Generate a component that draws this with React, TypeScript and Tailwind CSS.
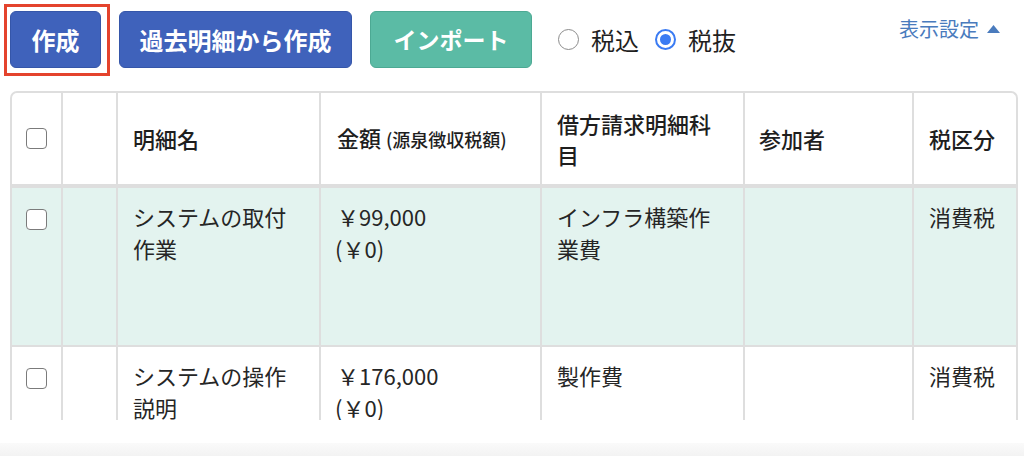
function Box() {
  return <span className="block w-[21px] h-[21px] rounded-[4px] border-[1.5px] border-[#7b7b7b] bg-white mx-auto" />;
}

function Radio({ checked, label }: { checked?: boolean; label: string }) {
  return (
    <label className="flex items-center gap-[12px]">
      {checked ? (
        <span className="flex items-center justify-center w-[21px] h-[21px] rounded-full border-2 border-[#3a7bf3] bg-white">
          <span className="w-[11px] h-[11px] rounded-full bg-[#3a7bf3]" />
        </span>
      ) : (
        <span className="w-[21px] h-[21px] rounded-full border-[1.5px] border-[#8c8c8c] bg-white" />
      )}
      <span className="text-[24px] text-[#1f1f1f]">{label}</span>
    </label>
  );
}

const rows = [
  { name: "システムの取付作業", amount: "￥99,000", tax: "(￥0)", account: "インフラ構築作業費", hl: true },
  { name: "システムの操作説明", amount: "￥176,000", tax: "(￥0)", account: "製作費", hl: false },
];

export default function App() {
  return (
    <div className="relative w-[1024px] h-[456px] overflow-hidden bg-white font-['Noto_Sans_CJK_JP','Noto_Sans',sans-serif] text-[#222]">
      <div className="flex items-start pl-[10px] pt-[11px] pr-[24px]">
        <button className="h-[57px] w-[91px] rounded-[6px] border border-[#3556a9] bg-[#3f62bb] text-[24px] font-bold text-white">
          作成
        </button>
        <button className="ml-[18px] h-[57px] w-[233px] rounded-[6px] border border-[#3556a9] bg-[#3f62bb] text-[24px] font-bold text-white">
          過去明細から作成
        </button>
        <button className="ml-[18px] h-[57px] w-[162px] rounded-[6px] border border-[#4ca993] bg-[#5bbba5] text-[23px] font-bold text-white">
          インポート
        </button>
        <div className="ml-[26px] flex h-[57px] items-center gap-[16px]">
          <Radio label="税込" />
          <Radio checked label="税抜" />
        </div>
        <button className="ml-auto mt-[3px] flex items-center gap-[8px] text-[20px] text-[#4a7bbd]">
          表示設定
          <svg width="13" height="8" viewBox="0 0 13 8">
            <path d="M0 8 L6.5 0 L13 8 Z" fill="#4a7bbd" />
          </svg>
        </button>
      </div>

      <div className="ml-[10px] mt-[23px] h-[329px] w-[1008px] overflow-hidden rounded-t-[7px] border-2 border-b-0 border-[#dedede]">
        <table className="w-[1162px] table-fixed border-separate border-spacing-0 text-[22px]">
          <colgroup>
            <col className="w-[51px]" />
            <col className="w-[55px]" />
            <col className="w-[203px]" />
            <col className="w-[221px]" />
            <col className="w-[203px]" />
            <col className="w-[169px]" />
            <col className="w-[260px]" />
          </colgroup>
          <thead>
            <tr className="h-[95px] text-left align-middle font-medium leading-[31px] text-[#1e1e1e]">
              <th className="border-b-4 border-r-2 border-[#dedede]">
                <Box />
              </th>
              <th className="border-b-4 border-r-2 border-[#dedede]" />
              <th className="border-b-4 border-r-2 border-[#dedede] pl-[15px] font-medium">明細名</th>
              <th className="border-b-4 border-r-2 border-[#dedede] pl-[16px] font-medium">
                金額 <span className="text-[18px]">(源泉徴収税額)</span>
              </th>
              <th className="border-b-4 border-r-2 border-[#dedede] px-[15px] font-medium">借方請求明細科目</th>
              <th className="border-b-4 border-r-2 border-[#dedede] pl-[14px] font-medium">参加者</th>
              <th className="border-b-4 border-[#dedede] pl-[15px] font-medium">税区分</th>
            </tr>
          </thead>
          <tbody>
            {rows.map((r) => (
              <tr
                key={r.name}
                className={`${r.hl ? "h-[159px] bg-[#e3f3ef]" : "h-[120px] bg-white"} align-top leading-[32px] text-[#262626]`}
              >
                <td className="border-b-2 border-r-2 border-[#dedede] pt-[21px]">
                  <Box />
                </td>
                <td className="border-b-2 border-r-2 border-[#dedede]" />
                <td className="border-b-2 border-r-2 border-[#dedede] px-[15px] pt-[12px]">{r.name}</td>
                <td className="border-b-2 border-r-2 border-[#dedede] pl-[16px] pt-[12px]">
                  <div>{r.amount}</div>
                  <div className="-ml-[2px]">{r.tax}</div>
                </td>
                <td className="border-b-2 border-r-2 border-[#dedede] px-[15px] pt-[12px]">{r.account}</td>
                <td className="border-b-2 border-r-2 border-[#dedede]" />
                <td className="border-b-2 border-[#dedede] pl-[15px] pt-[12px]">
                  消費税<span className="ml-[20px]">10%</span>
                </td>
              </tr>
            ))}
          </tbody>
        </table>
      </div>

      <div className="absolute bottom-0 left-0 h-[13px] w-full bg-gradient-to-b from-[#fafafa] to-[#f3f3f3]" />

      <div className="pointer-events-none absolute left-[4px] top-[4px] h-[72px] w-[106px] border-[3px] border-[#e4432d]" />
    </div>
  );
}
